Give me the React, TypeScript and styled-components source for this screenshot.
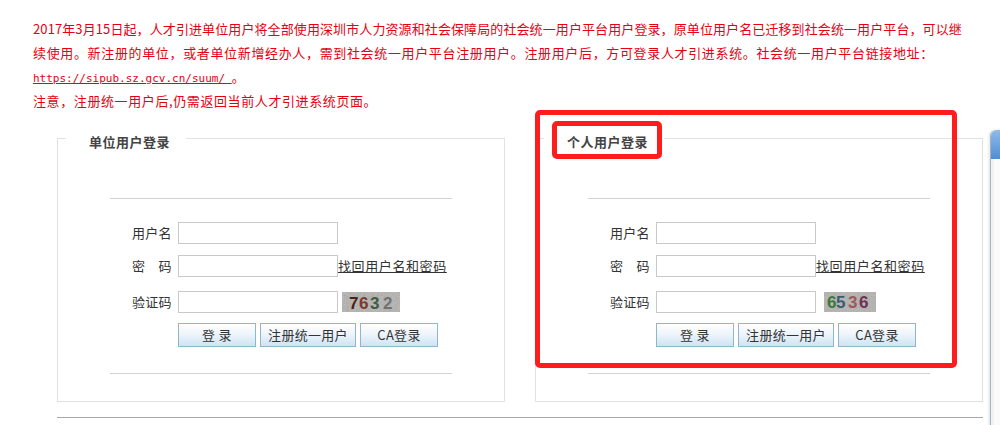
import React from 'react';
import styled, { createGlobalStyle } from 'styled-components';

const GlobalStyle = createGlobalStyle`
  html, body {
    margin: 0;
    padding: 0;
    background: #fff;
    overflow: hidden;
  }
  body {
    font-family: "Noto Sans CJK SC", "Microsoft YaHei", sans-serif;
    font-size: 13px;
    color: #333;
  }
`;

const RED = '#e60012';

const StyledPage = styled.div`
  position: relative;
  width: 1000px;
  height: 425px;
  overflow: hidden;
`;

const StyledNotice = styled.div`
  padding: 17px 0 0 33px;
  color: ${RED};
  font-size: 13px;
  line-height: 24px;
  white-space: nowrap;
`;

const StyledLine = styled.div<{ $spacing: number }>`
  height: 24px;
  letter-spacing: ${(p) => p.$spacing}px;
`;

const StyledLink = styled.a`
  font-family: "DejaVu Sans Mono", "Liberation Mono", monospace;
  font-size: 11px;
  line-height: 1;
  letter-spacing: 0;
  color: ${RED};
  text-decoration: underline;
`;

const StyledPanels = styled.div`
  display: flex;
  gap: 30px;
  width: 926px;
  margin-left: 57px;
  padding: 13px 0 15px;
  border-bottom: 1px solid #a8a8a8;
`;

const StyledPanel = styled.div`
  position: relative;
  flex: 1;
`;

const StyledFieldset = styled.fieldset`
  margin: 0;
  padding: 0 0 27px;
  min-width: 0;
  border: 1px solid #e2e2e2;
`;

const StyledLegend = styled.legend`
  margin-left: 8px;
  padding: 8px 16px 0 23px;
  line-height: 16px;
  font-weight: bold;
  color: #444;
  letter-spacing: 0.5px;
`;

const StyledRule = styled.div<{ $top: number }>`
  width: 342px;
  height: 1px;
  margin: ${(p) => p.$top}px auto 0;
  background: #d2d2d2;
`;

const StyledRow = styled.div<{ $gap: number }>`
  display: flex;
  align-items: center;
  height: 22px;
  margin-top: ${(p) => p.$gap}px;
  padding-left: 74px;
`;

const StyledLabel = styled.label`
  width: 40px;
  margin-right: 6px;
  line-height: 22px;
  color: #333;
  letter-spacing: 0.3px;
  white-space: nowrap;
`;

const StyledInput = styled.input`
  box-sizing: border-box;
  width: 160px;
  height: 22px;
  margin: 0;
  padding: 0 3px;
  border: 1px solid #c9c9c9;
  background: #fff;
  font: inherit;
`;

const StyledForgot = styled.a`
  color: #333;
  text-decoration: underline;
  letter-spacing: 0.6px;
  line-height: 22px;
  white-space: nowrap;
  cursor: pointer;
`;

const StyledCaptcha = styled.svg<{ $offset: number }>`
  display: block;
  margin-left: ${(p) => p.$offset}px;
`;

const StyledButtonRow = styled.div`
  display: flex;
  gap: 4px;
  margin-top: 10px;
  padding-left: 120px;
`;

const StyledButton = styled.button<{ $width: number }>`
  box-sizing: border-box;
  width: ${(p) => p.$width}px;
  height: 24px;
  margin: 0;
  padding: 0;
  border: 1px solid #8db7cf;
  background: linear-gradient(#ffffff 0%, #eef5fb 45%, #cfe3f3 100%);
  color: #333;
  font: inherit;
  font-size: 13px;
  line-height: 22px;
  letter-spacing: 0.3px;
  cursor: pointer;
`;

const StyledMark = styled.div<{ $left: number; $top: number; $width: number; $height: number }>`
  position: absolute;
  left: ${(p) => p.$left}px;
  top: ${(p) => p.$top}px;
  width: ${(p) => p.$width}px;
  height: ${(p) => p.$height}px;
  box-sizing: border-box;
  border: 5px solid #ff1c1c;
  border-radius: 5px;
  pointer-events: none;
`;

const StyledSideWindow = styled.div`
  position: absolute;
  left: 990px;
  top: 130px;
  width: 40px;
  height: 320px;
  border-left: 1px solid #a9b3bf;
  border-radius: 6px 0 0 0;
  background: #f2f2f2;
  box-shadow: -1px 0 3px rgba(0, 0, 0, 0.12);
`;

const StyledSideTitle = styled.div`
  height: 29px;
  border-radius: 6px 0 0 0;
  background: linear-gradient(#8ebbea, #4f8ed6);
`;

const StyledSideBody = styled.div`
  height: 100%;
  margin-left: 3px;
  background: #fbfbfb;
`;

type CaptchaProps = {
  digits: string;
  colors: string[];
  xs: number[];
  width: number;
  offset: number;
  baseline: number;
  seed: number;
};

function Captcha({ digits, colors, xs, width, offset, baseline, seed }: CaptchaProps): JSX.Element {
  const id = `noise-${digits}`;
  return (
    <StyledCaptcha $offset={offset} width={width} height={20} viewBox={`0 0 ${width} 20`}>
      <defs>
        <filter id={id} x="0" y="0" width="100%" height="100%">
          <feTurbulence type="fractalNoise" baseFrequency="1.1" numOctaves="2" seed={seed} />
          <feColorMatrix type="saturate" values="0" />
        </filter>
      </defs>
      <rect width={width} height={20} fill="#b3b1ae" />
      <rect width={width} height={20} filter={`url(#${id})`} opacity="0.55" />
      {digits.split('').map((d, i) => (
        <text
          key={i}
          x={xs[i]}
          y={baseline}
          fill={colors[i]}
          fontSize="17"
          fontWeight="bold"
          fontFamily="Liberation Sans, sans-serif"
        >
          {d}
        </text>
      ))}
    </StyledCaptcha>
  );
}

type LoginProps = {
  title: string;
  captcha: CaptchaProps;
  children?: React.ReactNode;
};

function LoginPanel({ title, captcha, children }: LoginProps): JSX.Element {
  return (
    <StyledPanel>
      <StyledFieldset>
        <StyledLegend>{title}</StyledLegend>
        <StyledRule $top={48} />
        <StyledRow $gap={23}>
          <StyledLabel>用户名</StyledLabel>
          <StyledInput type="text" />
        </StyledRow>
        <StyledRow $gap={11}>
          <StyledLabel>密　码</StyledLabel>
          <StyledInput type="password" />
          <StyledForgot>找回用户名和密码</StyledForgot>
        </StyledRow>
        <StyledRow $gap={14}>
          <StyledLabel>验证码</StyledLabel>
          <StyledInput type="text" />
          <Captcha {...captcha} />
        </StyledRow>
        <StyledButtonRow>
          <StyledButton $width={78}>登 录</StyledButton>
          <StyledButton $width={96}>注册统一用户</StyledButton>
          <StyledButton $width={78}>CA登录</StyledButton>
        </StyledButtonRow>
        <StyledRule $top={26} />
      </StyledFieldset>
      {children}
    </StyledPanel>
  );
}

function App(): JSX.Element {
  return (
    <StyledPage>
      <GlobalStyle />
      <StyledNotice>
        <StyledLine $spacing={0.1}>
          2017年3月15日起，人才引进单位用户将全部使用深圳市人力资源和社会保障局的社会统一用户平台用户登录，原单位用户名已迁移到社会统一用户平台，可以继
        </StyledLine>
        <StyledLine $spacing={0.65}>
          续使用。新注册的单位，或者单位新增经办人，需到社会统一用户平台注册用户。注册用户后，方可登录人才引进系统。社会统一用户平台链接地址：
        </StyledLine>
        <StyledLine $spacing={0}>
          <StyledLink>https://sipub.sz.gcv.cn/suum/ </StyledLink>。
        </StyledLine>
        <StyledLine $spacing={0.6}>注意，注册统一用户后,仍需返回当前人才引进系统页面。</StyledLine>
      </StyledNotice>

      <StyledPanels>
        <LoginPanel
          title="单位用户登录"
          captcha={{
            digits: '7632',
            colors: ['#4a2418', '#7c3a2c', '#3c5e44', '#707070'],
            xs: [7, 17, 28, 41],
            width: 58,
            offset: 4,
            baseline: 17,
            seed: 3,
          }}
        />
        <LoginPanel
          title="个人用户登录"
          captcha={{
            digits: '6536',
            colors: ['#3a7a3a', '#3c5c72', '#9c5a5c', '#6c3250'],
            xs: [3, 12, 24, 35],
            width: 52,
            offset: 8,
            baseline: 16,
            seed: 7,
          }}
        >
          <StyledMark $left={0} $top={-16} $width={422} $height={258} />
          <StyledMark $left={17} $top={-5} $width={110} $height={38} />
        </LoginPanel>
      </StyledPanels>

      <StyledSideWindow>
        <StyledSideTitle />
        <StyledSideBody />
      </StyledSideWindow>
    </StyledPage>
  );
}

export default App;
